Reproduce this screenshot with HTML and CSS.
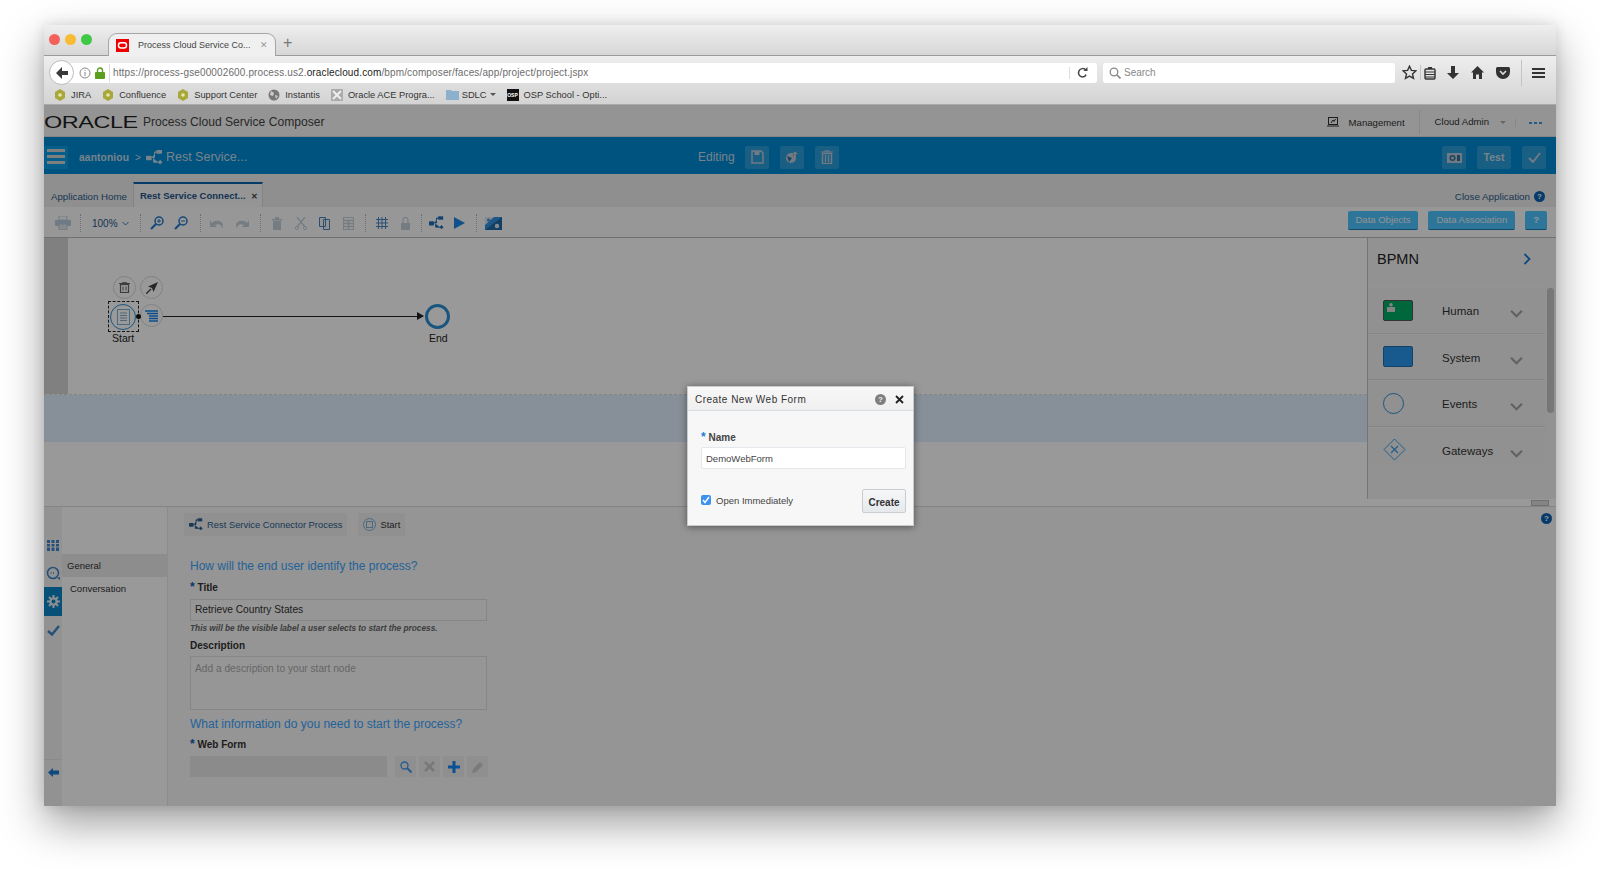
FILE: index.html
```html
<!DOCTYPE html>
<html lang="en">

<head>
    <meta charset="UTF-8">
    <title>Process Cloud Service Composer</title>
    <link rel="stylesheet" href="styles.css">
</head>

<body>
    <svg class="defs" width="0" height="0">
        <symbol id="hex" viewBox="0 0 12 12"><path d="M6 0l5 3v6l-5 3-5-3V3z" fill="#a8a83a"/><circle cx="6" cy="6" r="1.8" fill="#e6e6b0"/></symbol>
        <symbol id="chev" viewBox="0 0 14 10"><path d="M1 2l6 6 6-6" fill="none" stroke="#a2a2a2" stroke-width="2.4"/></symbol>
        <symbol id="chev-blue" viewBox="0 0 14 10"><path d="M1 2l6 6 6-6" fill="none" stroke="#3b7db5" stroke-width="2"/></symbol>
        <symbol id="process" viewBox="0 0 18 16"><rect x="0" y="6" width="6" height="5" rx="1"/><rect x="11" y="0" width="6" height="4"/><path d="M13 13l2-2 2 2-2 2zM6 8h3V2h2M8 9v4h5" fill="currentColor" stroke="currentColor" stroke-width="1"/></symbol>
    </svg>
    <div class="window">
        <div class="tabstrip">
            <div class="lights">
                <span class="light red"></span>
                <span class="light yellow"></span>
                <span class="light green"></span>
            </div>
            <div class="btab">
                <svg class="favicon" viewBox="0 0 13 13"><rect width="13" height="13" fill="#ee0000"/><rect x="2.5" y="3.8" width="8" height="5.2" rx="2.4" fill="none" stroke="#fff" stroke-width="1.5"/></svg>
                <span class="btab-title">Process Cloud Service Co...</span>
                <span class="btab-x">&#10005;</span>
            </div>
            <span class="newtab">+</span>
        </div>
        <div class="chrome">
            <div class="navrow">
                <div class="backbtn">
                    <svg width="14" height="14" viewBox="0 0 14 14"><path d="M1 7l6-6v4h6v4H7v4z" fill="#3a3a3a"/></svg>
                </div>
                <div class="urlbar">
                    <svg class="info" width="12" height="12" viewBox="0 0 12 12"><circle cx="6" cy="6" r="5" fill="none" stroke="#888"/><path d="M6 5v4M6 3v1" stroke="#888"/></svg>
                    <svg class="lock" width="10" height="12" viewBox="0 0 10 12"><path d="M2.5 5V3.5a2.5 2.5 0 015 0V5" fill="none" stroke="#5c9e1f" stroke-width="1.4"/><rect y="5" width="10" height="7" rx="1" fill="#5c9e1f"/></svg>
                    <span class="url">https://process-gse00002600.process.us2.<b>oraclecloud.com</b>/bpm/composer/faces/app/project/project.jspx</span>
                    <i class="url-sep"></i>
                    <svg class="reload" width="11" height="12" viewBox="0 0 11 12"><path d="M9 3.2A4.2 4.2 0 105.5 10a4 4 0 003.6-2.4" fill="none" stroke="#444" stroke-width="1.5"/><path d="M6.5 4h4V0z" fill="#444"/></svg>
                </div>
                <div class="searchbar">
                    <svg width="12" height="12" viewBox="0 0 12 12"><circle cx="5" cy="5" r="3.8" fill="none" stroke="#888" stroke-width="1.3"/><path d="M8 8l3.5 3.5" stroke="#888" stroke-width="1.6"/></svg>
                    <span>Search</span>
                </div>
                <div class="navicons">
                    <svg width="15" height="15" viewBox="0 0 15 15"><path d="M7.5 1.2l1.9 4.2 4.5.5-3.4 3 1 4.5-4-2.3-4 2.3 1-4.5-3.4-3 4.5-.5z" fill="none" stroke="#333" stroke-width="1.4"/></svg>
                    <i class="navsep"></i>
                    <svg width="12" height="14" viewBox="0 0 12 14"><rect x="1" y="3" width="10" height="10" rx="1" fill="none" stroke="#333" stroke-width="1.4"/><path d="M1 6h10M1 8.5h10M1 11h10" stroke="#333"/><rect x="4" y="1" width="4" height="2" fill="#333"/></svg>
                    <svg class="ni-dl" width="12" height="14" viewBox="0 0 12 14"><path d="M4 0h4v7h4l-6 6-6-6h4z" fill="#333"/></svg>
                    <svg class="ni-home" width="13" height="13" viewBox="0 0 13 13"><path d="M6.5 0L13 6.5h-2V13H8V8.5H5V13H2V6.5H0z" fill="#333"/></svg>
                    <svg class="ni-pocket" width="14" height="12" viewBox="0 0 14 12"><path d="M1.5 0h11A1.5 1.5 0 0114 1.5V5a7 7 0 01-14 0V1.5A1.5 1.5 0 011.5 0z" fill="#333"/><path d="M4 4l3 3 3-3" fill="none" stroke="#ddd" stroke-width="1.6"/></svg>
                    <i class="navsep big"></i>
                    <div class="burger"><i></i><i></i><i></i></div>
                </div>
            </div>
            <div class="bookmarks">
                <span class="bm"><svg width="12" height="12"><use href="#hex"/></svg>JIRA</span>
                <span class="bm"><svg width="12" height="12"><use href="#hex"/></svg>Confluence</span>
                <span class="bm"><svg width="12" height="12"><use href="#hex"/></svg>Support Center</span>
                <span class="bm"><svg width="12" height="12" viewBox="0 0 12 12"><circle cx="6" cy="6" r="5.5" fill="#777"/><path d="M3 2l3 2-1 3-3-1zM7 6l3 1-2 3z" fill="#ccc"/></svg>Instantis</span>
                <span class="bm"><svg width="12" height="12" viewBox="0 0 12 12"><rect width="12" height="12" rx="1" fill="#aaa"/><path d="M2 2l8 8M10 2l-8 8" stroke="#eee" stroke-width="2"/></svg>Oracle ACE Progra...</span>
                <span class="bm sdlc"><svg width="13" height="12" viewBox="0 0 13 12"><path d="M0 1h5l1 1h7v9H0z" fill="#8db0cc"/></svg>SDLC <i class="caret"></i></span>
                <span class="bm"><span class="osp">OSP</span>OSP School - Opti...</span>
            </div>
        </div>

        <div class="app">
            <div class="app-head">
                <span class="oracle">ORACLE</span>
                <span class="app-title">Process Cloud Service Composer</span>
                <div class="head-right">
                    <svg width="12" height="10" viewBox="0 0 12 10"><rect x="1.5" y=".5" width="9" height="7" fill="none" stroke="#333"/><path d="M0 9h12M4 6l2-3 1 1.5L8.5 2" stroke="#333" fill="none"/></svg>
                    <span class="hr-mgmt">Management</span>
                    <span class="hr-user">Cloud Admin</span>
                    <i class="caret light-caret"></i>
                    <span class="hr-dots"><i></i><i></i><i></i></span>
                </div>
            </div>

            <div class="bluebar">
                <div class="bar-left">
                    <div class="menu-btn"><i></i><i></i><i></i></div>
                    <span class="user">aantoniou</span>
                    <span class="crumb-sep">&gt;</span>
                    <svg class="proc-icon" width="17" height="15"><use href="#process"/></svg>
                    <span class="proc-name">Rest Service...</span>
                </div>
                <div class="bar-mid">
                    <span class="editing">Editing</span>
                    <span class="blue-btn"><svg width="13" height="14" viewBox="0 0 13 14"><path d="M1 1h9l2 2v10H1z" fill="none" stroke="#bcd" stroke-width="1.5"/><rect x="3.5" y="1" width="5" height="4" fill="#bcd"/></svg></span>
                    <span class="blue-btn"><svg width="14" height="14" viewBox="0 0 14 14"><circle cx="6" cy="8" r="5" fill="#bcd"/><path d="M2 6l5 2-3 4M8 3l2-3 3 3-2 1v3H9z" fill="#336f96"/><path d="M10 1l3 3h-2v3H9V4H7z" fill="#bcd"/></svg></span>
                    <span class="blue-btn"><svg width="12" height="14" viewBox="0 0 12 14"><path d="M0 2h12M4 2V.8h4V2" stroke="#bcd" fill="none"/><rect x="1.5" y="3.5" width="9" height="10" fill="none" stroke="#bcd" stroke-width="1.4"/><path d="M4.5 5v7M7.5 5v7" stroke="#bcd" stroke-width="1.3"/></svg></span>
                </div>
                <div class="bar-right">
                    <span class="blue-btn"><svg width="15" height="11" viewBox="0 0 15 11"><rect y="1" width="15" height="10" fill="#bcd"/><circle cx="5.5" cy="6" r="3" fill="#336f96"/><circle cx="5.5" cy="6" r="1.6" fill="#bcd"/><rect x="10" y="3" width="3" height="6" fill="#336f96"/></svg></span>
                    <span class="blue-btn test-btn">Test</span>
                    <span class="blue-btn"><svg width="13" height="11" viewBox="0 0 13 11"><path d="M1 6l4 4 7-9" fill="none" stroke="#bcd" stroke-width="2"/></svg></span>
                </div>
            </div>

            <div class="apptabs">
                <span class="apptab">Application Home</span>
                <span class="apptab active">Rest Service Connect...<b>&#10005;</b></span>
                <span class="close-app">Close Application <i class="help">?</i></span>
            </div>

            <div class="toolbar">
                <span class="tb-btn"><svg width="16" height="14" viewBox="0 0 16 14"><rect x="4" y="0" width="8" height="4" fill="none" stroke="#b8cde0"/><rect y="4" width="16" height="6" rx="1" fill="#b8cde0"/><rect x="4" y="8" width="8" height="6" fill="#e4e4e4" stroke="#b8cde0"/></svg></span>
                <i class="tb-sep"></i>
                <span class="tb-zoom">100% <svg width="7" height="5"><use href="#chev-blue"/></svg></span>
                <i class="tb-sep"></i>
                <span class="tb-btn"><svg width="14" height="14" viewBox="0 0 14 14"><circle cx="9" cy="5" r="4" fill="none" stroke="#2277cc" stroke-width="1.5"/><path d="M1 13l5-5" stroke="#2277cc" stroke-width="2.2"/><path d="M7 5h4M9 3v4" stroke="#2277cc"/></svg></span>
                <span class="tb-btn"><svg width="14" height="14" viewBox="0 0 14 14"><circle cx="9" cy="5" r="4" fill="none" stroke="#2277cc" stroke-width="1.5"/><path d="M1 13l5-5" stroke="#2277cc" stroke-width="2.2"/><path d="M7 5h4" stroke="#2277cc"/></svg></span>
                <i class="tb-sep wide"></i>
                <span class="tb-btn"><svg width="15" height="12" viewBox="0 0 15 12"><path d="M2 6a6 5 0 0111 2l-1 4c0-4-3-6-7-4l2 2H0V3z" fill="#c3d0da"/></svg></span>
                <span class="tb-btn"><svg width="15" height="12" viewBox="0 0 15 12"><path d="M13 6A6 5 0 002 8l1 4c0-4 3-6 7-4L8 10h7V3z" fill="#c3d0da"/></svg></span>
                <i class="tb-sep wide"></i>
                <span class="tb-btn"><svg width="10" height="13" viewBox="0 0 10 13"><path d="M0 2h10v1.4H0zM3 0h4v2H3zM1 4h8v9H1z" fill="#c3d0da"/></svg></span>
                <span class="tb-btn"><svg width="12" height="13" viewBox="0 0 12 13"><path d="M2 0l8 10M10 0L2 10" stroke="#c3d0da" stroke-width="1.4"/><circle cx="2" cy="11" r="1.6" fill="none" stroke="#c3d0da"/><circle cx="10" cy="11" r="1.6" fill="none" stroke="#c3d0da"/></svg></span>
                <span class="tb-btn tb-close"><svg width="11" height="14" viewBox="0 0 11 14"><path d="M.5 1.5h6v9h-6zM4.500 3.500h6v10h-6z" fill="#f4f4f4" stroke="#4a86c0"/></svg></span>
                <span class="tb-btn"><svg width="11" height="13" viewBox="0 0 11 13"><rect x=".5" y=".5" width="10" height="12" fill="none" stroke="#c3d0da"/><path d="M1 3.500h9M1 6.500h9M1 9.500h9M5.500 3.500v9" stroke="#c3d0da" stroke-width="1.600"/></svg></span>
                <i class="tb-sep"></i>
                <span class="tb-btn"><svg width="12" height="12" viewBox="0 0 12 12"><path d="M2.500 0v12M6 0v12M9.500 0v12M0 2.500h12M0 6h12M0 9.500h12" stroke="#4a86c0"/></svg></span>
                <span class="tb-btn tb-close"><svg width="9" height="13" viewBox="0 0 9 13"><path d="M2 6V3a2.500 2.500 0 015 0v3" fill="none" stroke="#c3d0da" stroke-width="1.200"/><rect y="6" width="9" height="7" fill="#c3d0da"/></svg></span>
                <i class="tb-sep narrow"></i>
                <span class="tb-btn proc-dark"><svg width="15" height="14"><use href="#process"/></svg></span>
                <span class="tb-btn tb-close"><svg width="11" height="12" viewBox="0 0 11 12"><path d="M0 0l11 6-11 6z" fill="#1b88e8"/></svg></span>
                <i class="tb-sep"></i>
                <span class="tb-btn"><svg width="17" height="13" viewBox="0 0 17 13"><rect width="17" height="13" fill="#3290e0"/><path d="M0 13L17 0v13z" fill="#1e6ca8"/><path d="M0 0h9L0 8z" fill="#e0e8f0"/><circle cx="3.500" cy="3" r="1.500" fill="#3290e0"/><circle cx="12" cy="9" r="2.200" fill="#e0e8f0"/></svg></span>
                <div class="tb-right">
                    <span class="data-btn">Data Objects</span>
                    <span class="data-btn">Data Association</span>
                    <span class="data-btn data-q">?</span>
                </div>
            </div>

            <div class="work">
                <div class="canvas">
                    <div class="lane">
                        <div class="gutter"></div>
                        <div class="lane-body">
                            <span class="mini-btn mb-del"><svg width="11" height="11" viewBox="0 0 11 11"><path d="M0 1.500h11M3.500 1.500V.3h4v1.200" stroke="#666" fill="none"/><rect x="1.500" y="2.500" width="8" height="8" fill="none" stroke="#666" stroke-width="1.200"/><path d="M4 4.500v4M7 4.500v4" stroke="#666"/></svg></span>
                            <span class="mini-btn mb-arrow"><svg width="12" height="12" viewBox="0 0 12 12"><path d="M0 12l5-5" stroke="#444" stroke-width="1.300"/><path d="M12 0L7.500 10 6 6 2 4.500z" fill="#444"/></svg></span>
                            <span class="mini-btn mb-list"><svg width="13" height="12" viewBox="0 0 13 12"><path d="M0 1h13M2 3.500h11M4 6h9M4 8.500h9M4 11h9" stroke="#0f83e8" stroke-width="1.400"/></svg></span>
                            <div class="sel-box"></div>
                            <div class="start-node"><svg width="13" height="16" viewBox="0 0 13 16"><rect x=".5" y=".5" width="12" height="15" fill="none" stroke="#7fb0d2"/><path d="M3 4h7M3 6.500h7M3 9h7M3 11.500h7" stroke="#7fb0d2"/></svg></div>
                            <span class="node-label nl-start">Start</span>
                            <span class="dot"></span>
                            <div class="flow"></div>
                            <div class="end-node"></div>
                            <span class="node-label nl-end">End</span>
                        </div>
                    </div>
                    <div class="band"></div>
                    <div class="below"></div>
                </div>
                <div class="bpmn">
                    <div class="bpmn-head">
                        <span>BPMN</span>
                        <svg width="8" height="12" viewBox="0 0 8 12"><path d="M1.500 1l5 5-5 5" fill="none" stroke="#1b7ad0" stroke-width="1.800"/></svg>
                    </div>
                    <div class="bpmn-body">
                        <div class="bpmn-list">
                            <div class="bpmn-item">
                                <span class="bi-icon bi-human"><svg width="8" height="9" viewBox="0 0 9 10"><circle cx="4.500" cy="2" r="2" fill="#ddd"/><rect y="4.500" width="9" height="5.500" fill="#ddd"/></svg></span>
                                <span class="bi-label">Human</span>
                                <svg class="bi-chev" width="13" height="9"><use href="#chev"/></svg>
                            </div>
                            <div class="bpmn-item">
                                <span class="bi-icon bi-system"></span>
                                <span class="bi-label">System</span>
                                <svg class="bi-chev" width="13" height="9"><use href="#chev"/></svg>
                            </div>
                            <div class="bpmn-item">
                                <span class="bi-icon bi-event"></span>
                                <span class="bi-label">Events</span>
                                <svg class="bi-chev" width="13" height="9"><use href="#chev"/></svg>
                            </div>
                            <div class="bpmn-item">
                                <span class="bi-gate"><svg width="23" height="23" viewBox="0 0 23 23"><path d="M11.500 1l10.500 10.500L11.500 22 1 11.500z" fill="none" stroke="#3a9fe8"/><path d="M8 8l7 7M15 8l-7 7" stroke="#3a9fe8" stroke-width="1.300"/></svg></span>
                                <span class="bi-label">Gateways</span>
                                <svg class="bi-chev" width="13" height="9"><use href="#chev"/></svg>
                            </div>
                        </div>
                        <div class="bpmn-scroll"><i></i></div>
                    </div>
                    <span class="grabber"></span>
                </div>
            </div>

            <div class="props">
                <div class="rail">
                    <svg class="r-grid" width="12" height="11" viewBox="0 0 12 11"><path d="M0 0h3v11H0zM4.500 0h3v11h-3zM9 0h3v11H9z" fill="#3e86c6"/><path d="M0 3.500h12M0 7h12" stroke="#f3f3f3"/></svg>
                    <svg class="r-chat" width="14" height="14" viewBox="0 0 14 14"><circle cx="7" cy="7" r="5.500" fill="none" stroke="#3e86c6" stroke-width="1.600"/><path d="M4.500 7h5" stroke="#3e86c6" stroke-dasharray="1 1.500" stroke-width="1.500"/><path d="M11 12l3 2v-3z" fill="#3e86c6"/></svg>
                    <div class="r-active"><svg width="13" height="13" viewBox="0 0 13 13"><path d="M6.500 0v13M0 6.500h13M2 2l9 9M11 2l-9 9" stroke="#e8eef2" stroke-width="2"/><circle cx="6.500" cy="6.500" r="4.300" fill="#e8eef2"/><circle cx="6.500" cy="6.500" r="2" fill="#0d87c9"/></svg></div>
                    <svg class="r-check" width="13" height="11" viewBox="0 0 13 11"><path d="M1 6l4 3.500L12 1" fill="none" stroke="#3e86c6" stroke-width="2.400"/></svg>
                    <div class="r-back"><svg width="11" height="9" viewBox="0 0 11 9"><path d="M0 4.500L5 0v2.500h6v4H5V9z" fill="#1b7ad0"/></svg></div>
                </div>
                <div class="subnav">
                    <div class="sn-item current">General</div>
                    <div class="sn-item">Conversation</div>
                </div>
                <div class="main">
                    <div class="chips">
                        <span class="chip proc-chip"><svg width="14" height="13"><use href="#process"/></svg>Rest Service Connector Process</span>
                        <span class="chip"><svg class="chip-ic" width="13" height="13" viewBox="0 0 13 13"><circle cx="6.500" cy="6.500" r="6" fill="none" stroke="#7fb0d2"/><rect x="3.500" y="3.500" width="6" height="6" fill="none" stroke="#7fb0d2"/></svg>Start</span>
                    </div>
                    <h3 class="q first">How will the end user identify the process?</h3>
                    <label class="flabel"><em>*</em> Title</label>
                    <div class="input">Retrieve Country States</div>
                    <p class="hint">This will be the visible label a user selects to start the process.</p>
                    <label class="flabel desc">Description</label>
                    <div class="input area">Add a description to your start node</div>
                    <h3 class="q">What information do you need to start the process?</h3>
                    <label class="flabel"><em>*</em> Web Form</label>
                    <div class="webform">
                        <div class="wf-field"></div>
                        <span class="wf-btn"><svg width="12" height="12" viewBox="0 0 12 12"><circle cx="4.500" cy="4.500" r="3.500" fill="none" stroke="#3a96e8" stroke-width="1.300"/><path d="M7 7l4.500 4.500" stroke="#3a96e8" stroke-width="2"/></svg></span>
                        <span class="wf-btn"><svg width="11" height="11" viewBox="0 0 11 11"><path d="M1 1l9 9M10 1l-9 9" stroke="#c8c8c8" stroke-width="2.600"/></svg></span>
                        <span class="wf-btn"><svg width="12" height="12" viewBox="0 0 12 12"><path d="M6 0v12M0 6h12" stroke="#1188f5" stroke-width="3"/></svg></span>
                        <span class="wf-btn"><svg width="12" height="12" viewBox="0 0 12 12"><path d="M0 12l1-4 7-7 3 3-7 7z" fill="#cccccc"/></svg></span>
                    </div>
                </div>
                <i class="help props-help">?</i>
            </div>

            <div class="overlay"></div>

            <div class="dialog">
                <div class="dlg-head">
                    <span>Create New Web Form</span>
                    <i class="dlg-help">?</i>
                    <svg width="9" height="9" viewBox="0 0 9 9"><path d="M1 1l7 7M8 1L1 8" stroke="#222" stroke-width="1.800"/></svg>
                </div>
                <div class="dlg-body">
                    <label class="dlg-label"><em>*</em> Name</label>
                    <div class="dlg-input">DemoWebForm</div>
                    <div class="dlg-foot">
                        <span class="check"><svg width="8" height="8" viewBox="0 0 8 8"><path d="M1 4l2 2.500L7 1" fill="none" stroke="#fff" stroke-width="1.500"/></svg></span>
                        <span class="check-text">Open Immediately</span>
                        <span class="create">Create</span>
                    </div>
                </div>
            </div>
        </div>
    </div>
</body>

</html>
```

FILE: styles.css
```css
* {
    padding: 0;
    margin: 0;
    box-sizing: border-box;
}

html,
body {
    height: 869px;
    overflow: hidden;
    background-color: #fff;
    font-family: "Liberation Sans", Arial, sans-serif;
}

i,
em {
    font-style: normal;
}

.defs {
    position: absolute;
}

.window {
    display: flex;
    flex-direction: column;
    width: 1512px;
    height: 781px;
    margin: 25px 0 0 44px;
    box-shadow: 0 18px 40px rgba(0, 0, 0, .38), 0 0 12px rgba(0, 0, 0, .12);
}

/* browser chrome */
.tabstrip {
    display: flex;
    align-items: flex-end;
    height: 31px;
    padding-left: 5px;
    background: linear-gradient(#efefef, #d6d6d6);
    border-bottom: 1px solid #9a9a9a;
}

.lights {
    display: flex;
    gap: 5px;
    align-self: flex-start;
    margin-top: 9px;
}

.light {
    width: 11px;
    height: 11px;
    border-radius: 50%;
}

.red {
    background-color: #f4615a;
}

.yellow {
    background-color: #f8bb34;
}

.green {
    background-color: #3ec945;
}

.btab {
    display: flex;
    align-items: center;
    width: 168px;
    height: 23px;
    margin: 0 0 -1px 16px;
    padding: 0 0 0 7px;
    background-color: #f0f0f0;
    border: 1px solid #a5a5a5;
    border-bottom: 0;
    border-radius: 9px 9px 0 0;
    font-size: 9px;
    color: #444;
    white-space: nowrap;
}

.favicon {
    width: 13px;
    height: 13px;
}

.btab-title {
    margin-left: 9px;
}

.btab-x {
    margin-left: 9px;
    font-size: 9px;
    color: #999;
}

.newtab {
    align-self: center;
    margin: 6px 0 0 7px;
    font-size: 16px;
    color: #777;
}

.chrome {
    background: linear-gradient(#eeeeee, #d3d3d3);
    border-bottom: 1px solid #a9a9a9;
}

.navrow {
    display: flex;
    align-items: center;
    height: 31px;
    padding: 2px 0 0 5px;
}

.backbtn {
    z-index: 1;
    display: flex;
    align-items: center;
    justify-content: center;
    width: 25px;
    height: 25px;
    background-color: #fff;
    border: 1px solid #bbb;
    border-radius: 50%;
}

.urlbar {
    display: flex;
    align-items: center;
    width: 1031px;
    height: 20px;
    margin-left: -8px;
    padding-left: 13px;
    background-color: #fff;
    border-radius: 0 3px 3px 0;
    font-size: 10px;
    color: #6d6d6d;
}

.urlbar b {
    font-weight: normal;
    color: #222;
}

.lock {
    margin-left: 4px;
}

.url {
    flex: 1;
    margin-left: 4px;
    padding-left: 3px;
    border-left: 1px solid #ddd;
    line-height: 18px;
    letter-spacing: .13px;
}

.url-sep {
    width: 1px;
    height: 12px;
    margin-right: 7px;
    background-color: #ddd;
}

.reload {
    margin-right: 9px;
}

.searchbar {
    display: flex;
    align-items: center;
    gap: 3px;
    width: 292px;
    height: 20px;
    margin-left: 6px;
    padding-left: 6px;
    background-color: #fff;
    border-radius: 3px;
    font-size: 10px;
    color: #888;
}

.navicons {
    display: flex;
    align-items: center;
    margin-left: 7px;
}

.navsep {
    width: 1px;
    height: 15px;
    margin: 0 3px;
    background-color: #c4c4c4;
}

.navsep.big {
    height: 26px;
    margin: 0 10px 0 11px;
}

.ni-dl {
    margin-left: 11px;
}

.ni-home {
    margin-left: 12px;
}

.ni-pocket {
    margin-left: 12px;
}

.burger i {
    display: block;
    width: 13px;
    height: 2px;
    margin: 2px 0;
    background-color: #333;
}

.bookmarks {
    display: flex;
    align-items: center;
    gap: 11px;
    height: 17px;
    padding: 0 0 2px 10px;
    font-size: 9.300px;
    color: #333;
}

.bm {
    display: flex;
    align-items: center;
    gap: 5px;
}

.sdlc {
    gap: 3px;
}

.caret {
    display: inline-block;
    width: 0;
    height: 0;
    border: 3px solid transparent;
    border-top: 3px solid #555;
    border-bottom: 0;
}

.osp {
    width: 12px;
    height: 12px;
    background-color: #111;
    color: #fff;
    font-size: 5px;
    line-height: 12px;
    text-align: center;
    font-weight: bold;
}

/* the app */
.app {
    position: relative;
    flex: 1;
    display: flex;
    flex-direction: column;
    min-height: 0;
    font-size: 10px;
    color: #333;
}

.app-head {
    display: flex;
    align-items: center;
    height: 32px;
    padding-top: 3px;
    background-color: #f7f7f7;
    border-bottom: 1px solid #ddd;
}

.oracle {
    display: inline-block;
    width: 64px;
    transform: scaleX(1.42);
    transform-origin: left;
    font-size: 16.500px;
    letter-spacing: -.3px;
    color: #222;
}

.app-title {
    margin-left: 35px;
    font-size: 12.100px;
    color: #444;
}

.head-right {
    display: flex;
    align-items: center;
    margin-left: auto;
    font-size: 9.600px;
}

.hr-mgmt {
    margin: 0 14px 0 10px;
}

.hr-user {
    margin-right: 11px;
    padding-left: 15px;
    border-left: 1px solid #e2e2e2;
    line-height: 24px;
}

.light-caret {
    border-top-color: #aaa;
}

.hr-dots {
    display: flex;
    gap: 2px;
    margin: 2px 11px 0 9px;
    padding: 3px 3px 3px 13px;
    border-left: 1px solid #e2e2e2;
    line-height: 0;
}

.hr-dots i {
    width: 3px;
    height: 2px;
    background-color: #3b97df;
}

.bluebar {
    position: relative;
    display: flex;
    align-items: center;
    justify-content: space-between;
    height: 37px;
    padding-top: 3px;
    background-color: #008ad4;
    color: #c6dbe8;
}

.bar-left {
    display: flex;
    align-items: center;
}

.menu-btn {
    width: 24px;
    height: 23px;
    padding: 3px 3px;
    background-color: #0b9ee8;
}

.menu-btn i {
    display: block;
    height: 3px;
    margin-bottom: 3px;
    background-color: #d2d2d2;
}

.user {
    margin-left: 11px;
    font-size: 10.300px;
    font-weight: bold;
    letter-spacing: .1px;
}

.crumb-sep {
    margin: 0 5px 0 6px;
}

.proc-icon {
    color: #c6dbe8;
    fill: #c6dbe8;
}

.proc-name {
    margin-left: 3px;
    font-size: 12.500px;
}

.bar-mid {
    position: absolute;
    left: 654px;
    display: flex;
    align-items: center;
}

.editing {
    width: 47px;
    font-size: 12px;
}

.blue-btn {
    display: flex;
    align-items: center;
    justify-content: center;
    width: 24px;
    height: 23px;
    margin-right: 11px;
    background-color: #2b9fdc;
    border-radius: 2px;
    font-weight: bold;
}

.bar-right {
    display: flex;
    margin-right: -1px;
}

.test-btn {
    width: 34px;
    font-size: 10.500px;
}

.apptabs {
    display: flex;
    align-items: flex-end;
    height: 33px;
    padding-left: 2px;
    background-color: #eeeeee;
    color: #2c5c8a;
}

.apptab {
    height: 25px;
    padding: 0 5px;
    line-height: 29px;
    font-size: 9.700px;
}

.apptab.active {
    width: 130px;
    margin-left: 1px;
    padding-left: 6px;
    background-color: #f8f8f8;
    border: 1px solid #ddd;
    border-top: 2px solid #0a62ad;
    border-bottom: 0;
    line-height: 24px;
    font-size: 9.500px;
    font-weight: bold;
    color: #24578a;
    white-space: nowrap;
}

.apptab.active b {
    margin-left: 5px;
    font-size: 8px;
    color: #444;
}

.close-app {
    display: flex;
    align-items: center;
    gap: 4px;
    align-self: center;
    margin: 12px 11px 0 auto;
    font-size: 9.800px;
}

.help {
    display: inline-block;
    width: 11px;
    height: 11px;
    background-color: #0b62b3;
    border-radius: 50%;
    color: #fff;
    font-size: 8px;
    font-weight: bold;
    line-height: 11px;
    text-align: center;
}

.toolbar {
    display: flex;
    align-items: center;
    height: 31px;
    padding: 2px 0 0 7px;
    background-color: #fcfcfc;
    border-bottom: 1px solid #bbb;
    color: #26588a;
}

.tb-btn {
    display: flex;
    align-items: center;
    justify-content: center;
    width: 24px;
    height: 20px;
}

.tb-close {
    margin-left: -1px;
}

.proc-dark {
    color: #1f6fb8;
    fill: #1f6fb8;
}

.tb-sep {
    width: 1px;
    height: 18px;
    margin: 0 4px 0 5px;
    border-left: 1px dotted #bbb;
}

.tb-sep.wide {
    margin-left: 7px;
}

.tb-sep.narrow {
    margin: 0 2px 0 4px;
}

.tb-zoom {
    display: flex;
    align-items: center;
    gap: 4px;
    width: 50px;
    padding-left: 7px;
    font-size: 10px;
}

.tb-right {
    display: flex;
    gap: 10px;
    margin: -6px 9px 0 auto;
}

.data-btn {
    height: 19px;
    padding: 0 8px;
    background-color: #4dc5ff;
    border-radius: 2px;
    border-bottom: 1px solid #1d7ab5;
    line-height: 18px;
    font-size: 9.500px;
    color: #eef4f8;
}

.data-q {
    font-weight: bold;
}

/* canvas and palette */
.work {
    display: flex;
    height: 268px;
    background-color: #fff;
}

.canvas {
    flex: 1;
    display: flex;
    flex-direction: column;
}

.lane {
    display: flex;
    height: 157px;
    border-bottom: 1px dashed #ddd;
}

.gutter {
    width: 24px;
    background-color: #d6d6d6;
}

.lane-body {
    position: relative;
    flex: 1;
}

.band {
    height: 47px;
    background-color: #e2f0ff;
}

.below {
    flex: 1;
}

.mini-btn {
    position: absolute;
    display: flex;
    align-items: center;
    justify-content: center;
    width: 23px;
    height: 23px;
    border: 1px solid #d8d8d8;
    border-radius: 50%;
}

.mb-del {
    left: 45px;
    top: 38px;
}

.mb-arrow {
    left: 72px;
    top: 38px;
}

.mb-list {
    left: 72px;
    top: 66px;
}

.sel-box {
    position: absolute;
    left: 40px;
    top: 63px;
    width: 31px;
    height: 31px;
    border: 1px dashed #222;
}

.start-node {
    position: absolute;
    left: 42px;
    top: 66px;
    display: flex;
    align-items: center;
    justify-content: center;
    width: 26px;
    height: 26px;
    border: 1px solid #2a8fd0;
    border-radius: 50%;
}

.node-label {
    position: absolute;
    font-size: 10.500px;
    color: #222;
}

.nl-start {
    left: 44px;
    top: 94px;
}

.nl-end {
    left: 361px;
    top: 94px;
}

.dot {
    position: absolute;
    left: 68px;
    top: 76px;
    width: 5px;
    height: 5px;
    background-color: #111;
    border-radius: 50%;
}

.flow {
    position: absolute;
    left: 95px;
    top: 78px;
    width: 260px;
    height: 1px;
    background-color: #222;
}

.flow::after {
    content: "";
    position: absolute;
    right: -1px;
    top: -4px;
    border-left: 7px solid #222;
    border-top: 4.500px solid transparent;
    border-bottom: 4.500px solid transparent;
}

.end-node {
    position: absolute;
    left: 357px;
    top: 66px;
    width: 25px;
    height: 25px;
    border: 3px solid #2a90d4;
    border-radius: 50%;
}

.bpmn {
    position: relative;
    width: 189px;
    height: 261px;
    background-color: #f4f4f4;
    border-left: 1px solid #c4c4c4;
}

.bpmn-head {
    display: flex;
    align-items: center;
    justify-content: space-between;
    height: 49px;
    padding: 0 25px 8px 9px;
    font-size: 14.500px;
    color: #222;
}

.bpmn-body {
    display: flex;
}

.bpmn-list {
    width: 177px;
    height: 177px;
    overflow: hidden;
    background-color: #f2f2f2;
}

.bpmn-item {
    display: flex;
    align-items: center;
    height: 46.500px;
    padding-left: 15px;
    padding-right: 22px;
    border-bottom: 1px solid #e0e0e0;
    border-top: 1px solid #f7f7f7;
}

.bi-icon {
    width: 30px;
    height: 21px;
    margin-right: 29px;
}

.bi-human {
    padding: 2px 0 0 3px;
    background-color: #00ab63;
    border: 1px solid #555;
    border-radius: 2px;
}

.bi-human svg {
    display: block;
}

.bi-system {
    background-color: #2996ec;
    border: 1px solid #1f6fb0;
    border-radius: 2px;
}

.bi-event {
    width: 21px;
    margin-right: 38px;
    border: 1px solid #2a8fd8;
    border-radius: 50%;
}

.bi-gate {
    width: 23px;
    height: 23px;
    margin-right: 36px;
}

.bi-label {
    flex: 1;
    margin-top: 2px;
    font-size: 11.500px;
    color: #333;
}

.bi-chev {
    margin-top: 7px;
}

.bpmn-scroll {
    flex: 1;
    padding: 1px 2px 0 2px;
}

.bpmn-scroll i {
    display: block;
    width: 7px;
    height: 125px;
    background-color: #c6c6c6;
    border-radius: 3px;
}

.grabber {
    position: absolute;
    right: 7px;
    bottom: -7px;
    width: 18px;
    height: 6px;
    background-color: #ddd;
    border: 1px solid #bbb;
}

/* lower panel */
.props {
    position: relative;
    flex: 1;
    display: flex;
    min-height: 0;
    background-color: #f8f8f8;
    border-top: 1px solid #ddd;
}

.rail {
    display: flex;
    flex-direction: column;
    width: 18px;
    background-color: #f3f3f3;
    align-items: center;
}

.r-grid {
    margin-top: 33px;
}

.r-chat {
    margin-top: 15px;
}

.r-active {
    display: flex;
    align-items: center;
    justify-content: center;
    width: 18px;
    height: 29px;
    margin-top: 7px;
    background-color: #0d87c9;
}

.r-check {
    margin-top: 9px;
}

.r-back {
    display: flex;
    justify-content: center;
    width: 18px;
    margin-top: 123px;
    padding-top: 8px;
    border-top: 1px solid #e6e6e6;
}

.subnav {
    width: 106px;
    padding-top: 47px;
    background-color: #ffffff;
    border-right: 1px solid #eaeaea;
    font-size: 9.500px;
}

.sn-item {
    height: 23px;
    padding-left: 8px;
    line-height: 23px;
}

.sn-item.current {
    padding-left: 5px;
    background-color: #ebebeb;
}

.main {
    flex: 1;
    padding: 6px 0 0 22px;
}

.chips {
    display: flex;
    gap: 11px;
    margin: 0 0 0 -6px;
}

.chip {
    display: flex;
    align-items: center;
    gap: 4px;
    height: 23px;
    padding: 0 5px;
    background-color: #f0f0f0;
    font-size: 9.400px;
}

.proc-chip {
    color: #2a608f;
    fill: #2a608f;
}

.q {
    margin-top: 6px;
    font-size: 12px;
    font-weight: normal;
    color: #3aa6ff;
    line-height: 17px;
}

.q.first {
    margin-top: 22px;
}

.flabel {
    display: block;
    margin-top: 5px;
    font-weight: bold;
    font-size: 10px;
    line-height: 12px;
}

.q.first + .flabel {
    margin-top: 6px;
}

.flabel em {
    color: #0a62ad;
    font-size: 12px;
}

.flabel.desc {
    margin-top: 6px;
}

.input {
    width: 297px;
    height: 22px;
    margin-top: 5px;
    padding-left: 4px;
    background-color: #fbfbfb;
    border: 1px solid #e0e0e0;
    line-height: 20px;
    font-size: 10.200px;
}

.input.area {
    height: 54px;
    margin-top: 4px;
    color: #aaa;
    line-height: 24px;
}

.hint {
    margin-top: 1px;
    font-size: 8.300px;
    font-style: italic;
    font-weight: bold;
    color: #666;
    line-height: 12px;
}

.webform {
    display: flex;
    gap: 3px;
    margin-top: 5px;
}

.wf-field {
    width: 197px;
    height: 21px;
    margin-right: 5px;
    background-color: #e8e8e8;
}

.wf-btn {
    display: flex;
    align-items: center;
    justify-content: center;
    width: 21px;
    height: 21px;
    background-color: #efefef;
}

.props-help {
    position: absolute;
    top: 6px;
    right: 4px;
}

/* dim layer and the dialog */
.overlay {
    position: absolute;
    top: 0;
    right: 0;
    bottom: 0;
    left: 0;
    background-color: rgba(0, 0, 0, .4);
}

.dialog {
    position: absolute;
    left: 643px;
    top: 281px;
    width: 227px;
    height: 140px;
    background-color: #f7f7f7;
    border: 1px solid #c8ccd0;
    box-shadow: 0 1px 7px rgba(0, 0, 0, .45);
}

.dlg-head {
    display: flex;
    align-items: center;
    height: 24px;
    padding: 1px 9px 0 7px;
    background: linear-gradient(#f8f8f8, #efefef);
    border-bottom: 1px solid #d5dce2;
    font-size: 10px;
    letter-spacing: .48px;
    color: #333;
}

.dlg-help {
    width: 11px;
    height: 11px;
    margin: 0 9px 0 auto;
    background-color: #7e7e7e;
    border-radius: 50%;
    color: #eee;
    font-size: 8px;
    font-weight: bold;
    line-height: 11px;
    text-align: center;
    letter-spacing: 0;
}

.dlg-body {
    padding: 20px 7px 0 13px;
}

.dlg-label {
    display: block;
    font-size: 10px;
    font-weight: bold;
    color: #444;
    line-height: 13px;
}

.dlg-label em {
    color: #1f7fd6;
    font-size: 12px;
}

.dlg-input {
    width: 205px;
    height: 22px;
    margin-top: 3px;
    padding-left: 4px;
    background-color: #fff;
    border: 1px solid #e4e8ec;
    border-radius: 2px;
    line-height: 21px;
    font-size: 9.500px;
    color: #444;
}

.dlg-foot {
    display: flex;
    align-items: center;
    margin-top: 20px;
}

.check {
    display: flex;
    align-items: center;
    justify-content: center;
    width: 10px;
    height: 10px;
    margin-top: -2px;
    background-color: #3b92ee;
    border-radius: 2px;
}

.check-text {
    margin: -2px 0 0 5px;
    font-size: 9.500px;
    color: #444;
}

.create {
    width: 44px;
    height: 24px;
    margin-left: auto;
    background: linear-gradient(#f6f7f8, #e5e9ec);
    border: 1px solid #c8cdd2;
    border-radius: 2px;
    line-height: 25px;
    text-align: center;
    font-size: 10px;
    font-weight: bold;
    color: #333;
}
```
